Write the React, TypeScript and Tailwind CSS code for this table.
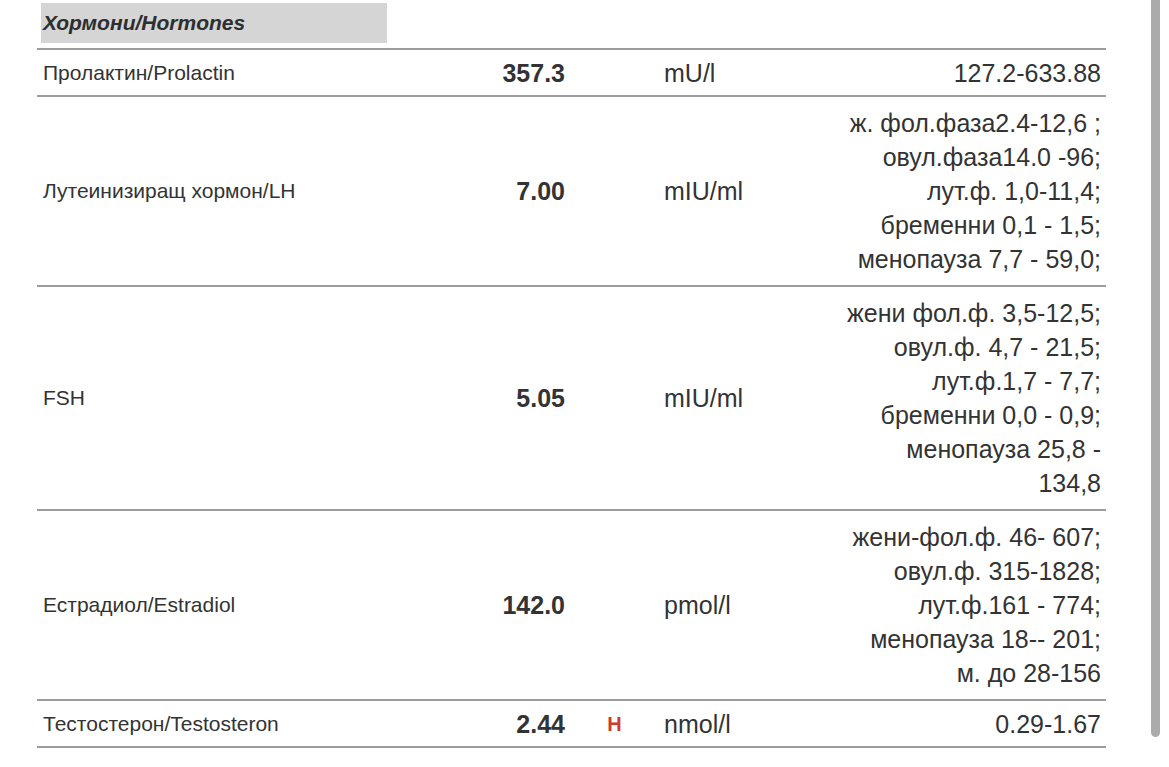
import React from "react";

type Row = {
  label: string;
  value: string;
  flag?: string;
  unit: string;
  range: string[];
};

const rows: Row[] = [
  { label: "Пролактин/Prolactin", value: "357.3", unit: "mU/l", range: ["127.2-633.88"] },
  {
    label: "Лутеинизиращ хормон/LH",
    value: "7.00",
    unit: "mIU/ml",
    range: [
      "ж. фол.фаза2.4-12,6 ;",
      "овул.фаза14.0 -96;",
      "лут.ф. 1,0-11,4;",
      "бременни 0,1 - 1,5;",
      "менопауза 7,7 - 59,0;",
    ],
  },
  {
    label: "FSH",
    value: "5.05",
    unit: "mIU/ml",
    range: [
      "жени фол.ф. 3,5-12,5;",
      "овул.ф. 4,7 - 21,5;",
      "лут.ф.1,7 - 7,7;",
      "бременни 0,0 - 0,9;",
      "менопауза 25,8 -",
      "134,8",
    ],
  },
  {
    label: "Естрадиол/Estradiol",
    value: "142.0",
    unit: "pmol/l",
    range: [
      "жени-фол.ф. 46- 607;",
      "овул.ф. 315-1828;",
      "лут.ф.161 - 774;",
      "менопауза 18-- 201;",
      "м. до 28-156",
    ],
  },
  {
    label: "Тестостерон/Testosteron",
    value: "2.44",
    flag: "H",
    unit: "nmol/l",
    range: ["0.29-1.67"],
  },
];

export default function App() {
  return (
    <div
      className="relative w-[1169px] h-[767px] bg-white overflow-hidden text-[#333333]"
      style={{ fontFamily: '"Liberation Sans", Arial, sans-serif' }}
    >
      <div className="pt-[3px] pl-[41px]">
        <div className="w-[346px] h-[40px] bg-[#d5d5d5] flex items-center pl-[2px]">
          <span className="text-[21px] font-bold italic text-[#2e2e2e]">Хормони/Hormones</span>
        </div>
      </div>
      <div className="ml-[37px] w-[1069px] mt-[5px]">
        <div className="h-[2px] bg-[#9c9c9c]" />
        {rows.map((r, i) => (
          <div key={i}>
            <div
              className={
                "grid grid-cols-[430px_98px_99px_160px_277px] items-center leading-[34px] " +
                (r.range.length > 1 ? "py-[9px]" : "pt-[6px] pb-[5px]")
              }
            >
              <div className="pl-[6px] text-[21px]">{r.label}</div>
              <div className="text-right text-[25px] font-bold">{r.value}</div>
              <div className="text-center text-[20px] font-bold text-[#d23a2f]">{r.flag ?? ""}</div>
              <div className="text-[25px]">{r.unit}</div>
              <div className="text-right text-[25px]">
                {r.range.map((t, j) => (
                  <div key={j}>{t}</div>
                ))}
              </div>
            </div>
            <div className="h-[2px] bg-[#9c9c9c]" />
          </div>
        ))}
      </div>
      <div className="absolute left-[1151px] top-0 w-[9px] h-[737px] bg-[#ababab] rounded-b-full" />
    </div>
  );
}
